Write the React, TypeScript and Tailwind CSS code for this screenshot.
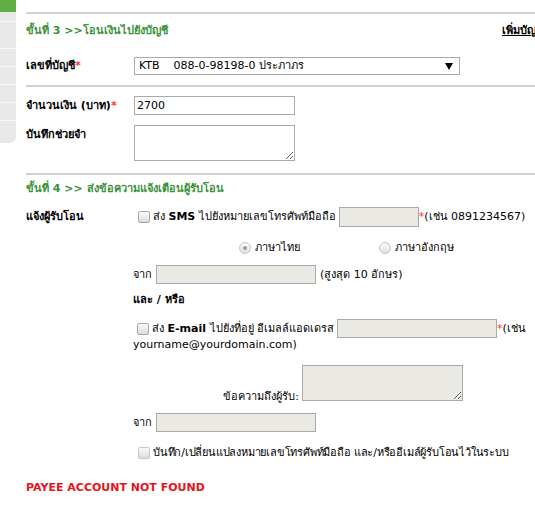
import type { ReactNode } from "react";

const green = "text-[#3b923b]";

function Rule() {
  return <div className="h-[2px] bg-[#d2d2d2]" />;
}

function Star() {
  return <span className="text-[#ff3030]">*</span>;
}

function Check({ dim = false }: { dim?: boolean }) {
  return (
    <span
      className={`ml-[4px] mr-[3px] inline-block h-[12px] w-[12px] shrink-0 rounded-[2px] border bg-gradient-to-b from-[#fafafa] to-[#dcdcdc] ${
        dim ? "border-[#c8c8c8]" : "border-[#a8a8a8]"
      }`}
    />
  );
}

function Radio({ on = false }: { on?: boolean }) {
  return (
    <span className="mr-[4px] inline-flex h-[12px] w-[12px] shrink-0 items-center justify-center rounded-full border border-[#c4c4c4] bg-gradient-to-b from-[#fafafa] to-[#e2e2e2]">
      {on && <span className="h-[4px] w-[4px] rounded-full bg-[#9a9a9a]" />}
    </span>
  );
}

function Box({ w, h = 19, off = false, children }: { w: number; h?: number; off?: boolean; children?: ReactNode }) {
  return (
    <div
      className={`flex shrink-0 items-center border border-[#a9a9a9] px-[2px] ${off ? "bg-[#ebe9e4]" : "bg-white"}`}
      style={{ width: w, height: h }}
    >
      {children}
    </div>
  );
}

function Area({ off = false }: { off?: boolean }) {
  return (
    <textarea
      readOnly
      className={`block h-[36px] w-[161px] shrink-0 border border-[#a9a9a9] outline-none ${off ? "bg-[#ebe9e4]" : "bg-white"}`}
    />
  );
}

function Label({ children }: { children: ReactNode }) {
  return <div className="w-[108px] shrink-0 font-bold">{children}</div>;
}

export default function App() {
  return (
    <div className="flex h-[513px] w-[535px] overflow-hidden bg-white text-[11px] leading-[14px] text-black font-['DejaVu_Sans','Noto_Sans',Tahoma,sans-serif]">
      {/* left menu, cut by the window edge */}
      <div className="w-[16px] shrink-0">
        <div className="h-[12px] bg-[#62ad45]" />
        <div className="overflow-hidden rounded-br-[6px] bg-[#e8e8e8]">
          <div className="h-[10px] border-b border-[#f6f6f6]" />
          <div className="h-[27px] border-b border-[#f6f6f6]" />
          <div className="h-[18px] border-b border-[#f6f6f6]" />
          <div className="h-[18px] border-b border-[#f6f6f6]" />
          <div className="h-[18px] border-b border-[#f6f6f6]" />
          <div className="h-[18px] border-b border-[#f6f6f6]" />
          <div className="h-[22px]" />
        </div>
      </div>

      <div className="ml-[10px] w-[560px] shrink-0 pt-[12px]">
        <Rule />

        <div className="mt-[7px] flex h-[20px] items-center">
          <div className={`w-[476px] shrink-0 font-bold ${green}`}>ขั้นที่ 3 &gt;&gt;โอนเงินไปยังบัญชี</div>
          <a className="whitespace-nowrap font-bold underline">เพิ่มบัญชี</a>
        </div>

        <div className="mt-[16px] flex h-[18px] items-center">
          <Label>
            เลขที่บัญชี<Star />
          </Label>
          <div className="flex h-[18px] w-[326px] items-center border border-[#a9a9a9] bg-white pl-[4px] pr-[6px]">
            <span className="flex-1 whitespace-pre">KTB    088-0-98198-0 ประภาภร</span>
            <svg width="8" height="7" viewBox="0 0 8 7">
              <path d="M0 0H8L4 7Z" fill="#000" />
            </svg>
          </div>
        </div>

        <div className="mt-[10px]">
          <Rule />
        </div>

        <div className="mt-[9px] flex h-[19px] items-center">
          <Label>
            จำนวนเงิน (บาท)<Star />
          </Label>
          <Box w={161}>2700</Box>
        </div>

        <div className="mt-[10px] flex h-[36px]">
          <div className="w-[108px] shrink-0 pt-[3px] font-bold">บันทึกช่วยจำ</div>
          <Area />
        </div>

        <div className="mt-[12px]">
          <Rule />
        </div>

        <div className={`mt-[4px] flex h-[20px] items-center font-bold ${green}`}>
          ขั้นที่ 4 &gt;&gt; ส่งข้อความแจ้งเตือนผู้รับโอน
        </div>

        <div className="mt-[8px] flex h-[20px] items-center whitespace-nowrap">
          <Label>แจ้งผู้รับโอน</Label>
          <Check />
          <span>
            ส่ง <b>SMS</b> ไปยังหมายเลขโทรศัพท์มือถือ
          </span>
          <div className="ml-[3px]">
            <Box w={80} h={20} off />
          </div>
          <Star />
          <span>(เช่น 0891234567)</span>
        </div>

        <div className="ml-[213px] mt-[14px] flex h-[13px] items-center whitespace-nowrap">
          <Radio on />
          <span className="w-[124px] shrink-0">ภาษาไทย</span>
          <Radio />
          <span>ภาษาอังกฤษ</span>
        </div>

        <div className="ml-[107px] mt-[11px] flex h-[19px] items-center whitespace-nowrap">
          <span className="w-[23px] shrink-0">จาก</span>
          <Box w={160} off />
          <span className="ml-[4px]">(สูงสุด 10 อักษร)</span>
        </div>

        <div className="ml-[107px] mt-[8px] flex h-[16px] items-center font-bold">และ / หรือ</div>

        <div className="ml-[107px] mt-[11px] flex h-[19px] items-center whitespace-nowrap">
          <Check />
          <span>
            ส่ง <b>E-mail</b> ไปยังที่อยู่ อีเมลล์แอดเดรส
          </span>
          <div className="ml-[3px]">
            <Box w={160} off />
          </div>
          <Star />
          <span>(เช่น</span>
        </div>
        <div className="ml-[107px] flex h-[14px] items-center">yourname@yourdomain.com)</div>

        <div className="ml-[107px] mt-[13px] flex h-[36px] items-end">
          <span className="w-[166px] shrink-0 text-right leading-[9px]">ข้อความถึงผู้รับ:</span>
          <div className="ml-[3px]">
            <Area off />
          </div>
        </div>

        <div className="ml-[107px] mt-[12px] flex h-[19px] items-center whitespace-nowrap">
          <span className="w-[23px] shrink-0">จาก</span>
          <Box w={160} off />
        </div>

        <div className="ml-[108px] mt-[15px] flex h-[12px] items-center whitespace-nowrap">
          <Check dim />
          <span className="tracking-[-0.2px]">บันทึก/เปลี่ยนแปลงหมายเลขโทรศัพท์มือถือ และ/หรืออีเมล์ผู้รับโอนไว้ในระบบ</span>
        </div>

        <div className="mt-[22px] flex h-[14px] items-center font-bold text-[#e8141a]">PAYEE ACCOUNT NOT FOUND</div>
      </div>
    </div>
  );
}
